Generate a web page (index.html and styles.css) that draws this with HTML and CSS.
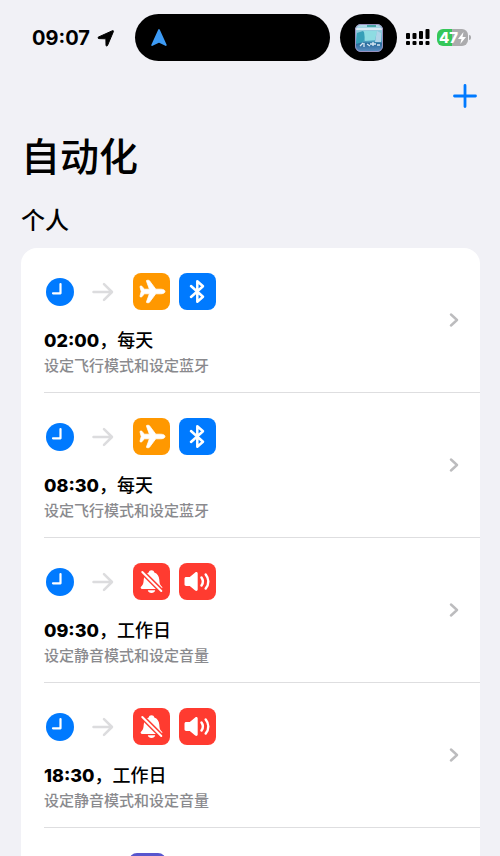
FILE: index.html
```html
<!DOCTYPE html>
<html lang="zh-CN">
<head>
<meta charset="utf-8">
<meta name="viewport" content="width=device-width, initial-scale=1">
<title>自动化</title>
<link rel="stylesheet" href="styles.css">
</head>
<body>
<svg class="sprite" aria-hidden="true">
  <symbol id="clock" viewBox="0 0 28 28">
    <circle cx="14" cy="14" r="14" fill="#007aff"/>
    <path d="M14.500 6v9.300H7" fill="none" stroke="#fff" stroke-width="2.200" stroke-linecap="round" stroke-linejoin="round"/>
  </symbol>
  <symbol id="arrow" viewBox="0 0 22 20">
    <path d="M1.500 10h18M12 2.200l8 7.800-8 7.800" fill="none" stroke="#dcdcde" stroke-width="2.500" stroke-linecap="round" stroke-linejoin="round"/>
  </symbol>
  <symbol id="chevron" viewBox="0 0 10 14">
    <path d="M2 1.500l6 5.500-6 5.500" fill="none" stroke="#bcbcbe" stroke-width="2.400" stroke-linecap="round" stroke-linejoin="round"/>
  </symbol>
  <symbol id="plane" viewBox="0 0 37 37">
    <path fill="#fff" stroke="#fff" stroke-width=".8" stroke-linejoin="round" d="M32 18.500c0 1.500-2 2.300-4.300 2.300h-4.900l-6.300 8.400c-.3.400-.6.500-1 .5h-1.400c-.5 0-.8-.4-.6-.9l2.900-8h-5.100l-2.200 2.800c-.2.200-.4.300-.7.300h-.9c-.4 0-.6-.3-.5-.7l1.200-4.700-1.200-4.700c-.1-.4.100-.7.500-.7h.9c.3 0 .5.100.7.300l2.200 2.800h5.100l-2.900-8c-.2-.5.100-.9.600-.9h1.400c.4 0 .7.100 1 .5l6.300 8.400h4.900c2.300 0 4.300.8 4.300 2.300z"/>
  </symbol>
  <symbol id="bluetooth" viewBox="0 0 37 37">
    <path d="M12 13l12 10.800-5.700 5V8.200l5.700 5L12 24" fill="none" stroke="#fff" stroke-width="2.500" stroke-linecap="round" stroke-linejoin="round"/>
  </symbol>
  <symbol id="bell" viewBox="0 0 37 37">
    <path fill="#fff" d="M18.500 7.300c1.500 0 2.500.9 2.800 2.200 3.100 1 4.800 3.600 5 7.300.2 3.900.8 5.100 2.500 6.800 1.100 1.100.5 2.400-1 2.400H9.200c-1.500 0-2.100-1.300-1-2.400 1.700-1.700 2.300-2.900 2.500-6.800.2-3.700 1.900-6.300 5-7.300.3-1.300 1.300-2.200 2.800-2.200z"/>
    <path fill="#fff" d="M14.800 27.200h7.400c-.4 1.700-1.800 2.700-3.700 2.700s-3.300-1-3.700-2.700z"/>
    <path d="M8.600 8.200l20.500 20.600" stroke="#ff3b30" stroke-width="5"/>
    <path d="M9.300 9l19 19" stroke="#fff" stroke-width="2" stroke-linecap="round"/>
  </symbol>
  <symbol id="speaker" viewBox="0 0 37 37">
    <path fill="#fff" d="M5.500 15.800c0-1 .7-1.700 1.700-1.700h3.600l5.400-4.700c1.100-.9 2.500-.4 2.500 1v16.200c0 1.400-1.400 1.900-2.500 1l-5.400-4.700H7.200c-1 0-1.700-.7-1.700-1.700z"/>
    <path d="M22.500 14.500c1.800 2.500 1.800 5.500 0 8M26.700 11.500c3.400 4.200 3.400 9.800 0 14" fill="none" stroke="#fff" stroke-width="2.500" stroke-linecap="round"/>
  </symbol>
</svg>

<header class="status">
  <div class="time">09:07
    <svg class="location" viewBox="0 0 18 18" aria-hidden="true"><path d="M1.500 8L15.500 1.700c.7-.3 1.200.3.900.9L10.500 16.500c-.3.800-1.500.7-1.500-.2l-.1-6.500-6.900-.2c-1.100 0-1.300-1.200-.5-1.600z" fill="#000" stroke="#000" stroke-linejoin="round"/></svg>
  </div>
  <div class="island">
    <svg class="nav-arrow" viewBox="0 0 16 18" aria-hidden="true"><path d="M8 1l6.800 15L8 12.800 1.200 16z" fill="#3d9bf5" stroke="#3d9bf5" stroke-width="1.800" stroke-linejoin="round"/></svg>
  </div>
  <div class="bubble">
    <svg class="thumb" viewBox="0 0 28 28" aria-hidden="true">
      <defs>
        <linearGradient id="sea" x2="0" y2="1"><stop offset="0" stop-color="#b8e0ec"/><stop offset=".6" stop-color="#58acc8"/><stop offset=".7" stop-color="#28699a"/><stop offset="1" stop-color="#5f92c5"/></linearGradient>
        <clipPath id="round"><rect width="28" height="28" rx="6"/></clipPath>
      </defs>
      <g clip-path="url(#round)">
        <rect width="28" height="28" fill="url(#sea)"/>
        <path d="M0 4h28v2H0z" fill="#dbeaf5"/>
        <path d="M12 1h9v2h-9z" fill="#48a6a7"/>
        <path d="M2 9l6-2 3 4-3 7-7 2z" fill="#369fb8"/>
        <path d="M9 7h13l-2 9-10 1z" fill="#8edce2"/>
        <path d="M22 7l4 2v9h-6z" fill="#b1d4e8"/>
        <path d="M5 22l3-3M9 19v4M12 20l3 2M18 18v4M15 20h6M22 21h3" stroke="#d7e9f4" stroke-width="1.300"/>
      </g>
      <rect x=".5" y=".5" width="27" height="27" rx="5.500" fill="none" stroke="#9a91be"/>
    </svg>
  </div>
  <svg class="signal" viewBox="0 0 24 17" aria-label="信号">
    <g fill="#000"><rect y="4" width="4" height="6" rx="1"/><rect x="6.500" y="4" width="4" height="6" rx="1"/><rect x="13" y="2" width="4" height="8" rx="1"/><rect x="19.500" width="4" height="10" rx="1"/><rect y="12" width="4" height="4" rx="1"/><rect x="6.500" y="12" width="4" height="4" rx="1"/><rect x="13" y="12" width="4" height="4" rx="1"/><rect x="19.500" y="12" width="4" height="4" rx="1"/></g>
  </svg>
  <div class="battery"><span>47</span><svg class="bolt" viewBox="0 0 8 12" aria-hidden="true"><path d="M5.500 0L0 7h3.500l-1.200 5L8 5H4.500z" fill="#fff"/></svg></div>
</header>

<nav class="toolbar">
  <button class="add" type="button" aria-label="新建自动化"><svg viewBox="0 0 24 24" aria-hidden="true"><path d="M12 1.500v21M1.500 12h21" stroke="#007aff" stroke-width="2.800" stroke-linecap="round"/></svg></button>
</nav>

<main class="content">
  <h1>自动化</h1>
  <h2>个人</h2>
  <ul class="list">
    <li><a class="row" href="#">
      <span class="body">
        <span class="icons"><svg class="clock"><use href="#clock"/></svg><svg class="arrow"><use href="#arrow"/></svg><svg class="tile orange"><use href="#plane"/></svg><svg class="tile blue"><use href="#bluetooth"/></svg></span>
        <span class="title"><b>02:00</b>，每天</span><span class="detail">设定飞行模式和设定蓝牙</span>
      </span><svg class="chevron"><use href="#chevron"/></svg>
    </a></li>
    <li><a class="row" href="#">
      <span class="body">
        <span class="icons"><svg class="clock"><use href="#clock"/></svg><svg class="arrow"><use href="#arrow"/></svg><svg class="tile orange"><use href="#plane"/></svg><svg class="tile blue"><use href="#bluetooth"/></svg></span>
        <span class="title"><b>08:30</b>，每天</span><span class="detail">设定飞行模式和设定蓝牙</span>
      </span><svg class="chevron"><use href="#chevron"/></svg>
    </a></li>
    <li><a class="row" href="#">
      <span class="body">
        <span class="icons"><svg class="clock"><use href="#clock"/></svg><svg class="arrow"><use href="#arrow"/></svg><svg class="tile red"><use href="#bell"/></svg><svg class="tile red"><use href="#speaker"/></svg></span>
        <span class="title"><b>09:30</b>，工作日</span><span class="detail">设定静音模式和设定音量</span>
      </span><svg class="chevron"><use href="#chevron"/></svg>
    </a></li>
    <li><a class="row" href="#">
      <span class="body">
        <span class="icons"><svg class="clock"><use href="#clock"/></svg><svg class="arrow"><use href="#arrow"/></svg><svg class="tile red"><use href="#bell"/></svg><svg class="tile red"><use href="#speaker"/></svg></span>
        <span class="title"><b>18:30</b>，工作日</span><span class="detail">设定静音模式和设定音量</span>
      </span><svg class="chevron"><use href="#chevron"/></svg>
    </a></li>
    <li><a class="row" href="#" aria-label="自动化">
      <span class="body"><span class="icons app"><svg class="tile purple"></svg></span></span>
    </a></li>
  </ul>
</main>
</body>
</html>
```
FILE: styles.css
```css
* { box-sizing: border-box; }

body {
  height: 100vh;
  margin: 0;
  overflow: hidden;
  background: #f1f1f6;
  color: #000;
  font-family: Inter, "Noto Sans CJK SC", sans-serif;
}

svg { display: block; flex: none; }
.sprite { position: absolute; width: 0; height: 0; }

.status {
  display: flex;
  align-items: center;
  padding: 14px 32px 0;
}
.time {
  display: flex;
  align-items: center;
  gap: 7px;
  width: 103px;
  font-size: 20px;
  font-weight: 700;
  line-height: 24px;
}
.location { width: 18px; height: 18px; }
.island {
  display: flex;
  flex: 1;
  align-items: center;
  height: 47px;
  padding-left: 16px;
  border-radius: 24px;
  background: #000;
}
.nav-arrow { width: 16px; height: 18px; }
.bubble {
  display: flex;
  align-items: center;
  justify-content: center;
  width: 57px;
  height: 47px;
  margin: 0 9px 0 10px;
  border-radius: 24px;
  background: #000;
}
.thumb { width: 28px; height: 28px; }
.signal { width: 24px; height: 17px; }
.battery {
  position: relative;
  display: flex;
  align-items: center;
  justify-content: center;
  width: 31px;
  height: 17px;
  margin-left: 7px;
  border-radius: 6px;
  background: linear-gradient(90deg, #35c759 47%, #ababad 47%);
  color: #fff;
  font-size: 15px;
  font-weight: 800;
  line-height: 17px;
}
.battery::after {
  content: "";
  position: absolute;
  top: 6px;
  right: -3px;
  width: 2px;
  height: 5px;
  border-radius: 0 2px 2px 0;
  background: #ababad;
}
.bolt { width: 8px; height: 12px; }

.toolbar {
  display: flex;
  justify-content: flex-end;
  padding: 23px 23px 0;
}
.add {
  padding: 0;
  border: 0;
  background: none;
}
.add svg { width: 24px; height: 24px; }

.content { padding: 20px 20px 0 21px; }
h1, h2 { margin: 0; font-weight: 500; }
h1 {
  font-size: 39px;
  line-height: 58px;
}
h2 {
  margin: 17px 0 9px;
  font-size: 24px;
  line-height: 36px;
}

.list {
  margin: 0;
  padding: 0;
  overflow: hidden;
  border-radius: 16px;
  background: #fff;
  list-style: none;
}
.row {
  display: flex;
  align-items: center;
  margin-left: 23px;
  padding-right: 21px;
  border-bottom: 1px solid #dedee0;
  color: inherit;
  text-decoration: none;
}
.body {
  display: flex;
  flex: 1;
  flex-direction: column;
  padding: 25px 0 14px;
}
.icons {
  display: flex;
  align-items: center;
  height: 37px;
  margin-bottom: 18px;
  padding-left: 2px;
}
.clock { width: 28px; height: 28px; }
.arrow { width: 22px; height: 20px; margin: 0 19px 0 18px; }
.tile {
  width: 37px;
  height: 37px;
  margin-right: 9px;
  border-radius: 8px;
}
.orange { background: #ff9800; }
.blue { background: #007aff; }
.red { background: #ff3b30; }
.purple { background: #5856ce; }
.app { padding-left: 85px; }
.title {
  font-size: 18px;
  font-weight: 500;
  line-height: 25px;
}
.title b { font-weight: 800; }
.detail {
  color: #8a8a8e;
  font-size: 15px;
  font-weight: 500;
  line-height: 25px;
}
.chevron { width: 10px; height: 14px; }
```
